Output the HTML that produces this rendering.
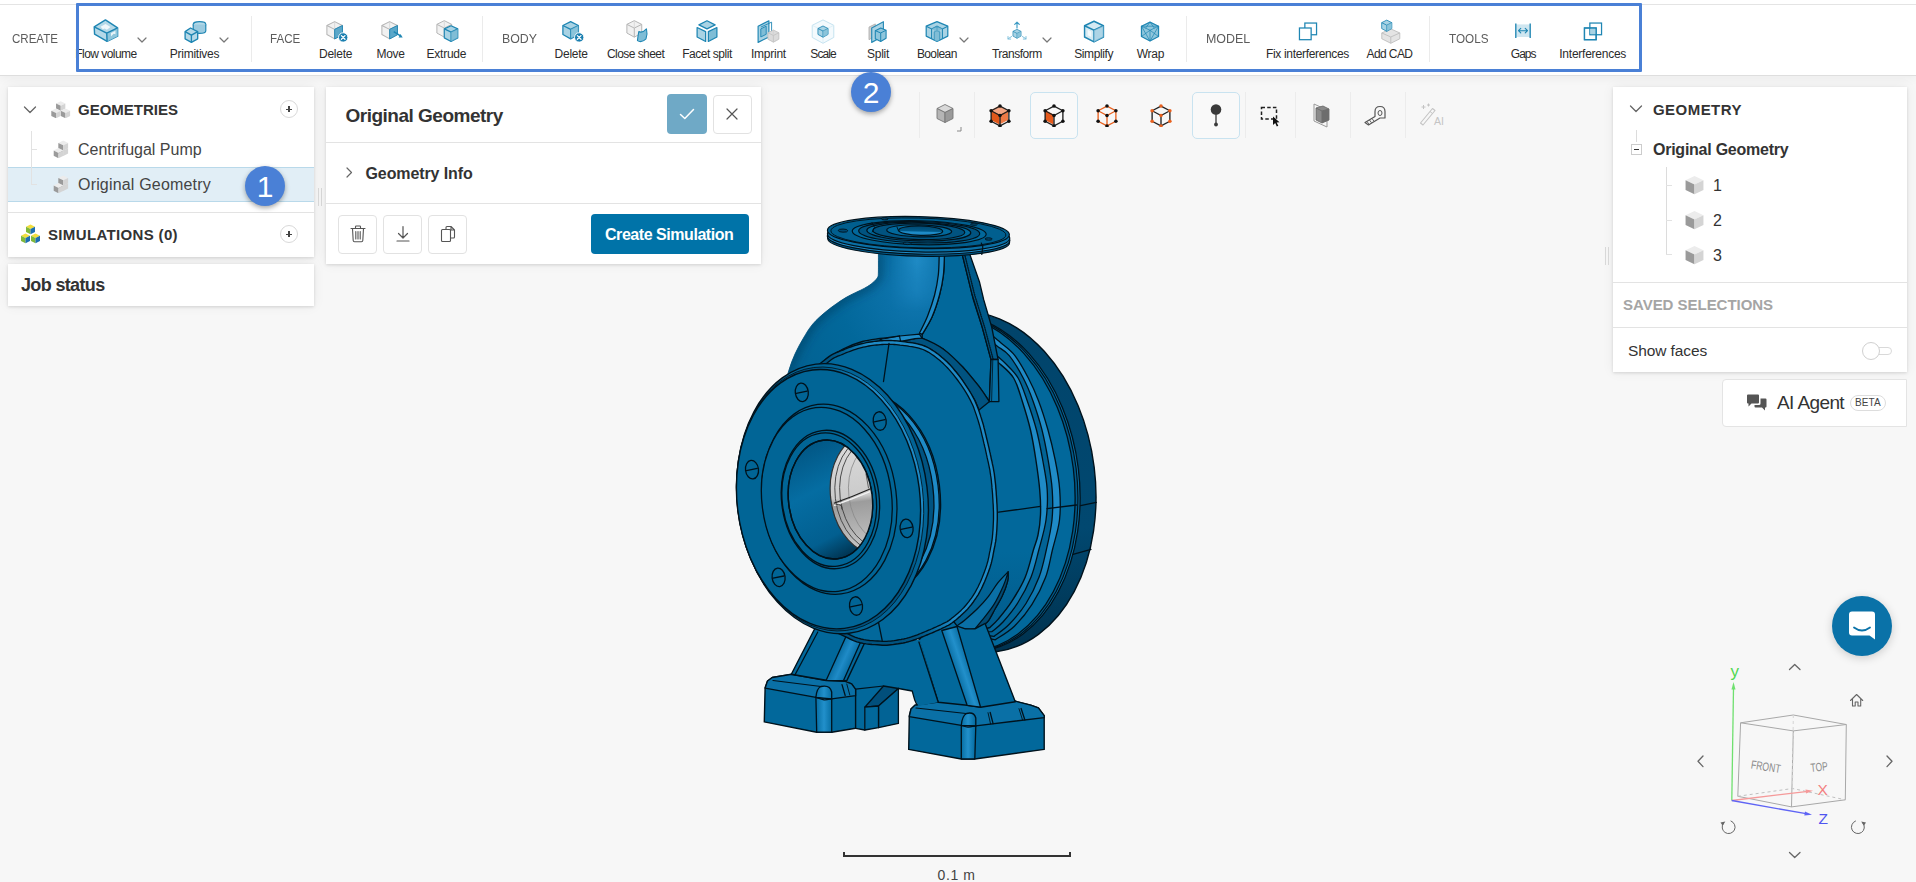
<!DOCTYPE html>
<html>
<head>
<meta charset="utf-8">
<title>SimScale</title>
<style>
*{box-sizing:border-box;margin:0;padding:0}
html,body{width:1916px;height:882px;overflow:hidden;background:#f7f7f7;font-family:"Liberation Sans",sans-serif;color:#333}
.abs{position:absolute}
#topbar{position:absolute;left:0;top:0;width:1916px;height:75.500px;background:#fff;border-bottom:1px solid #dedede;box-shadow:0 2px 10px rgba(0,0,0,.05)}
#topline{position:absolute;left:0;top:4px;width:1916px;height:1px;background:#e4e4e4}
#hl{position:absolute;left:76px;top:3px;width:1566px;height:69px;border:3.5px solid #4a80d6;background:transparent;border-radius:1px}
.grp{position:absolute;top:30.5px;font-size:13.5px;color:#5c5c5c;letter-spacing:0;white-space:nowrap;line-height:16px;transform-origin:0 50%}
.tl{position:absolute;top:47.2px;font-size:12px;color:#2b2b2b;white-space:nowrap;line-height:14px;transform:translateX(-50%);letter-spacing:-0.25px}
.sep{position:absolute;top:16px;width:1px;height:46px;background:#ebebeb}
.ti{position:absolute;top:19px;width:27px;height:25.2px;transform:translateX(-50%)}
.chev{position:absolute;width:10px;height:6px}
.panel{position:absolute;background:#fff;box-shadow:0 1px 3px rgba(0,0,0,.13),0 0 12px rgba(0,0,0,.06)}
.t{position:absolute;white-space:nowrap}
.plus{position:absolute;width:18px;height:18px;border:1px solid #d9d9d9;border-radius:50%;background:#fff}
.plus:before{content:"";position:absolute;left:5px;top:7.5px;width:6px;height:1.4px;background:#444}
.plus:after{content:"";position:absolute;left:7.3px;top:5px;width:1.4px;height:6px;background:#444}
.badge{position:absolute;width:40px;height:40px;border-radius:50%;background:#4a80d6;color:#fff;text-align:center;box-shadow:0 2px 5px rgba(0,0,0,.35)}
.ibtn{position:absolute;width:39px;height:39px;border:1px solid #e2e2e2;border-radius:4px;background:#fff}
.vsep{position:absolute;top:92px;width:1px;height:46px;background:#ececec}
</style>
</head>
<body>
<!-- TOPBAR -->
<div id="topbar"></div>
<div id="topline"></div>
<div id="toolbar">
<svg width="0" height="0" style="position:absolute">
<defs>
<!-- basic blue iso cube 24x24 centered at 12,12 -->
<symbol id="cubeB" viewBox="0 0 24 24">
<path d="M12 2 L21 6.5 L21 17 L12 22 L3 17 L3 6.5Z" fill="#a9d3e4" stroke="#1f86b3" stroke-width="1.5" stroke-linejoin="round"/>
<path d="M3 6.5 L12 11 L21 6.5 M12 11 L12 22" fill="none" stroke="#1f86b3" stroke-width="1.5" stroke-linejoin="round"/>
<path d="M12 11 L21 6.5 L21 17 L12 22Z" fill="#7fbdd6" opacity=".7"/>
</symbol>
<symbol id="cubeG" viewBox="0 0 24 24">
<path d="M12 2 L21 6.5 L21 17 L12 22 L3 17 L3 6.5Z" fill="#f1f1f1" stroke="#b5b5b5" stroke-width="1.2" stroke-linejoin="round"/>
<path d="M3 6.5 L12 11 L21 6.5 M12 11 L12 22" fill="none" stroke="#b5b5b5" stroke-width="1.2" stroke-linejoin="round"/>
<path d="M12 2 L12 11" stroke="#d0d0d0" stroke-width=".8"/>
</symbol>
<symbol id="chv" viewBox="0 0 10 6"><path d="M1 1 L5 5 L9 1" fill="none" stroke="#777" stroke-width="1.2" stroke-linecap="round" stroke-linejoin="round"/></symbol>
</defs>
</svg>
<div class="grp" style="left:12px;transform:scaleX(0.855)">CREATE</div>
<!-- Flow volume -->
<svg class="ti" style="left:106px" viewBox="0 0 30 28"><path d="M1.900 8.700 L14.400 1 L27.900 9.800 L27.900 19.100 L16.200 24.900 L2.300 16.800Z" fill="#b5d9e8" stroke="#1f86b3" stroke-width="1.600" stroke-linejoin="round"/><path d="M15.800 15.600 L27.900 9.800 L27.900 19.100 L16.200 24.900Z" fill="#8fc6dc"/><path d="M1.900 8.700 L15.800 15.600 L27.900 9.800 M15.800 15.600 L16.200 24.900" fill="none" stroke="#1f86b3" stroke-width="1.600" stroke-linejoin="round"/><path d="M9 8.500 L14.500 5.500 L20 9 L16 12 L13.500 10.500 L11.500 11.500Z M20.500 15.500 L25.500 13 L25.500 17 L23.500 16.500 L20.500 19.500Z" fill="#fff" opacity=".8"/></svg>
<div class="tl" style="left:106px;letter-spacing:-0.55px">Flow volume</div>
<svg class="chev" style="left:137px;top:37px"><use href="#chv"/></svg>
<!-- Primitives -->
<svg class="ti" style="left:195px" viewBox="0 0 30 28"><ellipse cx="20" cy="6" rx="7" ry="3" fill="#b5d9e8" stroke="#1f86b3" stroke-width="1.3"/><path d="M13 6 V13 A7 3 0 0 0 27 13 V6" fill="#9ccbe0" stroke="#1f86b3" stroke-width="1.3"/><path d="M10 10 L18 14 L18 22 L11 26 L4 22 L4 14Z" fill="#b5d9e8" stroke="#1f86b3" stroke-width="1.5" stroke-linejoin="round"/><path d="M4 14 L11 18 L18 14 M11 18 V26" fill="none" stroke="#1f86b3" stroke-width="1.5"/></svg>
<div class="tl" style="left:194.5px">Primitives</div>
<svg class="chev" style="left:219px;top:37px"><use href="#chv"/></svg>
<div class="sep" style="left:251px"></div>
<div class="grp" style="left:270px;transform:scaleX(0.857)">FACE</div>
<!-- Face delete -->
<svg class="ti" style="left:336px" viewBox="0 0 30 28"><use href="#cubeG" x="2" y="1" width="23" height="23"/><path d="M13.5 11.5 L22.2 7.2 V17.5 L13.5 22.2Z" fill="#5aa7c9" stroke="#1f86b3" stroke-width="1"/><circle cx="23" cy="20.5" r="5.2" fill="#1a7fb0" stroke="#fff" stroke-width="1"/><path d="M21 18.5 l4 4 m0 -4 l-4 4" stroke="#fff" stroke-width="1.4" stroke-linecap="round"/></svg>
<div class="tl" style="left:335.6px">Delete</div>
<!-- Face move -->
<svg class="ti" style="left:391px" viewBox="0 0 30 28"><use href="#cubeG" x="2" y="1" width="23" height="23"/><path d="M13.5 11.5 L22.2 7.2 V17.5 L13.5 22.2Z" fill="#5aa7c9" stroke="#1f86b3" stroke-width="1"/><path d="M18 14 L26 19" stroke="#1f86b3" stroke-width="1.5"/><path d="M28 20.5 L23.5 20.5 L25.5 16.8Z" fill="#1f86b3"/></svg>
<div class="tl" style="left:390.6px">Move</div>
<!-- Extrude -->
<svg class="ti" style="left:447px" viewBox="0 0 30 28"><use href="#cubeG" x="1" y="0" width="22" height="22"/><path d="M19.5 7.5 L27 11 V21 L19.5 25 L12 21 V11Z" fill="#a9d3e4" stroke="#1f86b3" stroke-width="1.3" stroke-linejoin="round"/><path d="M12 11 L19.5 14.5 L27 11 M19.5 14.5 V25" fill="none" stroke="#1f86b3" stroke-width="1.3"/><path d="M19.5 14.5 L27 11 V21 L19.5 25Z" fill="#6fb3d0" opacity=".7"/></svg>
<div class="tl" style="left:446.4px">Extrude</div>
<div class="sep" style="left:482px"></div>
<div class="grp" style="left:501.5px;transform:scaleX(0.914)">BODY</div>
<!-- Body delete -->
<svg class="ti" style="left:572px" viewBox="0 0 30 28"><use href="#cubeB" x="2" y="1" width="23" height="23"/><circle cx="23" cy="20.5" r="5.2" fill="#1a7fb0" stroke="#fff" stroke-width="1"/><path d="M21 18.5 l4 4 m0 -4 l-4 4" stroke="#fff" stroke-width="1.4" stroke-linecap="round"/></svg>
<div class="tl" style="left:571.2px">Delete</div>
<!-- Close sheet -->
<svg class="ti" style="left:637px" viewBox="0 0 30 28"><use href="#cubeG" x="1" y="0" width="22" height="22"/><path d="M17 14 Q21 16 25.5 11 Q27 17 25 22 Q20 27 15.5 24 Q16 19 17 14Z" fill="#7fbdd6" stroke="#1f86b3" stroke-width="1.2" stroke-linejoin="round"/></svg>
<div class="tl" style="left:635.6px;letter-spacing:-0.55px">Close sheet</div>
<!-- Facet split -->
<svg class="ti" style="left:707px" viewBox="0 0 30 28"><path d="M15 2 L24 6.5 L15 11 L6 6.5Z" fill="#a9d3e4" stroke="#1f86b3" stroke-width="1.4" stroke-linejoin="round"/><path d="M4 9.5 L13.5 14 V25 L4 20Z" fill="#a9d3e4" stroke="#1f86b3" stroke-width="1.4" stroke-linejoin="round"/><path d="M26 9.5 L16.5 14 V25 L26 20Z" fill="#7fbdd6" stroke="#1f86b3" stroke-width="1.4" stroke-linejoin="round"/></svg>
<div class="tl" style="left:707px;letter-spacing:-0.45px">Facet split</div>
<!-- Imprint -->
<svg class="ti" style="left:768px" viewBox="0 0 30 28"><path d="M4 8 L16 2 V20 L4 26Z" fill="#a9d3e4" stroke="#1f86b3" stroke-width="1.3" stroke-linejoin="round"/><path d="M7 11 L13 8 V17 L7 20Z" fill="#7fbdd6" stroke="#1f86b3" stroke-width="1"/><path d="M7 9 L19 3.5 V21" fill="none" stroke="#1f86b3" stroke-width="1"/><use href="#cubeG" x="13" y="11" width="16" height="16"/><path d="M21 12 l6.5 3.2 v7.6 l-6.5 3.6 l-6.500 -3.6 v-7.6z" fill="#c9c9c9" opacity=".55"/></svg>
<div class="tl" style="left:768.5px">Imprint</div>
<!-- Scale -->
<svg class="ti" style="left:823px" viewBox="0 0 30 28"><path d="M15 1 L27 7 V20.500 L15 27 L3 20.500 V7Z" fill="#f4fafd" stroke="#bfe0ee" stroke-width="1" stroke-linejoin="round"/><path d="M3 7 L15 13 L27 7 M15 13 V27" fill="none" stroke="#d5ebf4" stroke-width=".8"/><use href="#cubeB" x="7.5" y="6.500" width="15" height="15"/></svg>
<div class="tl" style="left:823px;letter-spacing:-0.95px">Scale</div>
<!-- Split -->
<svg class="ti" style="left:878px" viewBox="0 0 30 28"><path d="M5 9 L12 5.500 V19 L5 23Z" fill="#cfcfcf" stroke="#b0b0b0" stroke-width="1"/><path d="M8 10 L21 3 V19 L8 26Z" fill="#a9d3e4" stroke="#1f86b3" stroke-width="1.3" stroke-linejoin="round" opacity=".95"/><path d="M12 13 L18 10 L24 12.500 V21.500 L18 25 L12 22Z" fill="#8fc6dc" stroke="#1f86b3" stroke-width="1.2" stroke-linejoin="round"/><path d="M12 13 L18 15.500 L24 12.500 M18 15.500 V25" fill="none" stroke="#1f86b3" stroke-width="1.1"/></svg>
<div class="tl" style="left:878px">Split</div>
<!-- Boolean -->
<svg class="ti" style="left:937px" viewBox="0 0 30 28"><path d="M15 3 L27 8 V19 L15 25 L3 19 V8Z" fill="#a9d3e4" stroke="#1f86b3" stroke-width="1.4" stroke-linejoin="round"/><path d="M3 8 L9 11 L15 8 L21 11 L27 8 M9 11 V22 M21 11 V22 M15 8 V13 L12 14.500 V23.500 M15 13 L18 14.500 V23.500" fill="none" stroke="#1f86b3" stroke-width="1.2"/><path d="M9 11 L12 9.500 L15 8 L18 9.500 L21 11 L18 12.500 V23.500 L15 25 L12 23.500 V12.500Z" fill="#6fb3d0" opacity=".7"/></svg>
<div class="tl" style="left:936.8px;letter-spacing:-0.6px">Boolean</div>
<svg class="chev" style="left:959px;top:37px"><use href="#chv"/></svg>
<!-- Transform -->
<svg class="ti" style="left:1017px" viewBox="0 0 30 28"><use href="#cubeB" x="9" y="10.500" width="12" height="12"/><path d="M15 10 V4 M12.500 6 L15 3.500 L17.500 6" fill="none" stroke="#3d9bc4" stroke-width="1.3" stroke-linecap="round" stroke-linejoin="round"/><path d="M9 19.500 L5 22 M5 19.500 V22.300 H8" fill="none" stroke="#7fc0dc" stroke-width="1.1" stroke-linecap="round"/><path d="M21 19.500 L25 22 M25 19.500 V22.300 H22" fill="none" stroke="#7fc0dc" stroke-width="1.1" stroke-linecap="round"/></svg>
<div class="tl" style="left:1016.8px;letter-spacing:-0.5px">Transform</div>
<svg class="chev" style="left:1042px;top:37px"><use href="#chv"/></svg>
<!-- Simplify -->
<svg class="ti" style="left:1094px" viewBox="0 0 30 28"><path d="M15 2.500 L25.500 7.500 V20 L15 25.500 L4.500 20 V7.500Z" fill="#d4eaf3" stroke="#1f86b3" stroke-width="1.6" stroke-linejoin="round"/><path d="M4.500 7.500 L15 12.500 L25.500 7.500 M15 12.500 V25.500" fill="none" stroke="#1f86b3" stroke-width="1.6"/><path d="M15 12.500 L25.500 7.500 V20 L15 25.500Z" fill="#9ccbe0" opacity=".7"/><path d="M8 12 v6 l4 2 v-6z" fill="#fff" opacity=".7"/></svg>
<div class="tl" style="left:1093.6px;letter-spacing:-0.4px">Simplify</div>
<!-- Wrap -->
<svg class="ti" style="left:1150px" viewBox="0 0 30 28"><path d="M15 3.500 L24.500 8 V19.500 L15 24.500 L5.500 19.500 V8Z" fill="#8fc6dc" stroke="#1f86b3" stroke-width="1.4" stroke-linejoin="round"/><path d="M5.500 8 L15 12.500 L24.500 8 M15 12.500 V24.500 M5.500 8 L15 24.500 M24.500 8 L15 24.500 M5.500 19.500 L15 12.500 L24.500 19.500 M15 3.500 L10 10.300 M15 3.500 L20 10.300 M5.500 8 L24.500 8" fill="none" stroke="#1f86b3" stroke-width=".8"/></svg>
<div class="tl" style="left:1150.4px">Wrap</div>
<div class="sep" style="left:1185.500px"></div>
<div class="grp" style="left:1205.500px;transform:scaleX(0.921)">MODEL</div>
<!-- Fix interferences -->
<svg class="ti" style="left:1308px" viewBox="0 0 30 28"><rect x="11.500" y="4.500" width="13" height="13" fill="#fff" stroke="#1f86b3" stroke-width="1.4"/><rect x="5.500" y="10" width="13" height="13" fill="#fff" stroke="#1f86b3" stroke-width="1.4"/></svg>
<div class="tl" style="left:1307.500px;letter-spacing:-0.33px">Fix interferences</div>
<!-- Add CAD -->
<svg class="ti" style="left:1389px" viewBox="0 0 30 28"><path d="M17 11 L27 15.500 V22 L17 27 L7 22 V15.500Z" fill="#e4e4e4" stroke="#bdbdbd" stroke-width="1" stroke-linejoin="round"/><path d="M7 15.500 L17 20 L27 15.500 M17 20 V27" fill="none" stroke="#bdbdbd" stroke-width="1"/><use href="#cubeB" x="5" y="0" width="15" height="15"/></svg>
<div class="tl" style="left:1389.500px;letter-spacing:-0.6px">Add CAD</div>
<div class="sep" style="left:1429px"></div>
<div class="grp" style="left:1448.500px;transform:scaleX(0.868)">TOOLS</div>
<!-- Gaps -->
<svg class="ti" style="left:1523px" viewBox="0 0 30 28"><rect x="7" y="6" width="16" height="14" fill="#cfe6f0"/><path d="M7 5 V21 M23 5 V21" stroke="#1f86b3" stroke-width="1.5"/><path d="M10 13 H20 M12.500 10.500 L10 13 L12.500 15.500 M17.500 10.500 L20 13 L17.500 15.500" fill="none" stroke="#1f86b3" stroke-width="1.2" stroke-linecap="round" stroke-linejoin="round"/></svg>
<div class="tl" style="left:1523.200px;letter-spacing:-0.95px">Gaps</div>
<!-- Interferences -->
<svg class="ti" style="left:1593px" viewBox="0 0 30 28"><rect x="11.500" y="4.500" width="13" height="13" fill="#fff" stroke="#1f86b3" stroke-width="1.4"/><rect x="5.500" y="10" width="13" height="13" fill="none" stroke="#1f86b3" stroke-width="1.4"/><rect x="12.200" y="10.700" width="5.600" height="6.100" fill="#a9d3e4"/><rect x="5.500" y="10" width="13" height="13" fill="none" stroke="#1f86b3" stroke-width="1.4"/></svg>
<div class="tl" style="left:1592.700px">Interferences</div>
</div>
<div id="hl"></div>
<!-- LEFT PANELS -->
<div id="left">
<svg width="0" height="0" style="position:absolute"><defs>
<symbol id="gcube" viewBox="0 0 10 10"><path d="M5 0.200 L9.700 2.500 L5 4.800 L0.300 2.500Z" fill="#ececec"/><path d="M0.300 2.500 L5 4.800 V9.900 L0.300 7.600Z" fill="#9a9a9a"/><path d="M9.700 2.500 L5 4.800 V9.900 L9.700 7.600Z" fill="#d4d4d4"/></symbol>
</defs></svg>
<div class="panel" style="left:8px;top:87px;width:306px;height:170px"></div>
<div class="abs" style="left:8px;top:167px;width:306px;height:35px;background:#e1eef6;border-top:1px solid #b9d9ea;border-bottom:1px solid #b9d9ea"></div>
<div class="abs" style="left:8px;top:212px;width:306px;height:1px;background:#e3e3e3"></div>
<svg class="abs" style="left:23px;top:104.800px" width="14" height="10" viewBox="0 0 14 10"><path d="M1.500 2 L7 7.500 L12.500 2" fill="none" stroke="#666" stroke-width="1.300" stroke-linecap="round" stroke-linejoin="round"/></svg>
<svg class="abs" style="left:51px;top:100.500px" width="20" height="19" viewBox="0 0 20 19"><use href="#gcube" x="4.750" y="0" width="10" height="10"/><use href="#gcube" x="0" y="7.300" width="10" height="10"/><use href="#gcube" x="9.500" y="7.300" width="10" height="10"/></svg>
<div class="t" id="t_geoms" style="left:78px;top:100.800px;font-size:15px;font-weight:bold;line-height:18px;color:#333">GEOMETRIES</div>
<div class="plus" style="left:280px;top:100px"></div>
<div class="abs" style="left:31px;top:131px;width:1px;height:54px;background:#e2e2e2"></div>
<div class="abs" style="left:31px;top:149px;width:6px;height:1px;background:#e2e2e2"></div>
<div class="abs" style="left:31px;top:184px;width:6px;height:1px;background:#e2e2e2"></div>
<svg class="abs" style="left:52px;top:140px" width="17" height="19" viewBox="0 0 17 19"><use href="#gcube" x="6" y="5.550" width="10.500" height="10.500"/><use href="#gcube" x="6" y="0.300" width="10.500" height="10.500"/><use href="#gcube" x="1.280" y="7.860" width="10.500" height="10.500"/></svg>
<div class="t" id="t_cp" style="left:78px;top:140.200px;font-size:16px;line-height:20px;color:#444">Centrifugal Pump</div>
<svg class="abs" style="left:52px;top:175px" width="17" height="19" viewBox="0 0 17 19"><use href="#gcube" x="6" y="5.550" width="10.500" height="10.500"/><use href="#gcube" x="6" y="0.300" width="10.500" height="10.500"/><use href="#gcube" x="1.280" y="7.860" width="10.500" height="10.500"/></svg>
<div class="t" id="t_og" style="left:78px;top:175.200px;font-size:16px;line-height:20px;color:#444;letter-spacing:.18px">Original Geometry</div>
<div class="badge" style="left:245px;top:166px"><span style="font-size:30px;line-height:41px;display:block">1</span></div>
<!-- simulations icon -->
<svg class="abs" style="left:20px;top:224px" width="21" height="21" viewBox="0 0 21 21">
<g id="sc1"><path d="M10.500 0.500 L15 2.800 L10.500 5.100 L6 2.800Z" fill="#f1de3c"/><path d="M6 2.800 L10.500 5.100 V10.300 L6 8Z" fill="#7fb83a"/><path d="M15 2.800 L10.500 5.100 V10.300 L15 8Z" fill="#1d6fb0"/></g>
<use href="#sc1" x="-5" y="9"/><use href="#sc1" x="5" y="9"/></svg>
<div class="t" id="t_sim" style="left:48px;top:225.500px;font-size:15px;font-weight:bold;line-height:18px;color:#333;letter-spacing:0.35px">SIMULATIONS (0)</div>
<div class="plus" style="left:280px;top:225px"></div>
<div class="panel" style="left:8px;top:264px;width:306px;height:42px"></div>
<div class="t" id="t_job" style="left:21px;top:274px;font-size:18px;font-weight:bold;line-height:22px;color:#333;letter-spacing:-0.65px">Job status</div>
<!-- splitter -->
<div class="abs" style="left:318px;top:188px;width:1px;height:18px;background:#d8d8d8"></div>
<div class="abs" style="left:321px;top:188px;width:1px;height:18px;background:#d8d8d8"></div>
</div>
<!-- MIDDLE PANEL -->
<div id="mid">
<div class="panel" style="left:326px;top:87px;width:435px;height:177px"></div>
<div class="abs" style="left:326px;top:142px;width:435px;height:1px;background:#e3e3e3"></div>
<div class="abs" style="left:326px;top:203px;width:435px;height:1px;background:#e3e3e3"></div>
<div class="t" id="t_title" style="left:345.500px;top:103.700px;font-size:19px;line-height:24px;color:#333;font-weight:bold;letter-spacing:-.5px">Original Geometry</div>
<div class="abs" style="left:667px;top:94px;width:40px;height:40px;border-radius:4px;background:#6fa9c6"></div>
<svg class="abs" style="left:677px;top:105px" width="20" height="18" viewBox="0 0 20 18"><path d="M3.500 9.500 L7.800 13.500 L16.500 4.500" fill="none" stroke="#fff" stroke-width="1.500" stroke-linecap="round" stroke-linejoin="round"/></svg>
<div class="ibtn" style="left:712.500px;top:94.500px"></div>
<svg class="abs" style="left:724px;top:106px" width="16" height="16" viewBox="0 0 16 16"><path d="M3 3 L13 13 M13 3 L3 13" stroke="#555" stroke-width="1.200" stroke-linecap="round"/></svg>
<svg class="abs" style="left:344px;top:166px" width="10" height="13" viewBox="0 0 10 13"><path d="M3 2 L7.500 6.500 L3 11" fill="none" stroke="#666" stroke-width="1.200" stroke-linecap="round" stroke-linejoin="round"/></svg>
<div class="t" id="t_ginfo" style="left:365.500px;top:164.200px;font-size:16px;line-height:20px;color:#333;font-weight:bold;letter-spacing:-.1px">Geometry Info</div>
<div class="ibtn" style="left:338px;top:214.500px"></div>
<svg class="abs" style="left:349px;top:224px" width="18" height="20" viewBox="0 0 18 20"><path d="M2 4.500 H16 M6.500 4.500 V2.800 Q6.500 2 7.300 2 H10.700 Q11.500 2 11.500 2.800 V4.500 M3.500 4.500 L4.200 16.500 Q4.300 17.800 5.500 17.800 H12.500 Q13.700 17.800 13.800 16.500 L14.500 4.500 M6.800 7.500 V15 M9 7.500 V15 M11.200 7.500 V15" fill="none" stroke="#555" stroke-width="1.100" stroke-linecap="round" stroke-linejoin="round"/></svg>
<div class="ibtn" style="left:383px;top:214.500px"></div>
<svg class="abs" style="left:394px;top:224px" width="18" height="20" viewBox="0 0 18 20"><path d="M9 2.500 V13.500 M4.500 9.500 L9 14 L13.500 9.500 M3 17 H15" fill="none" stroke="#555" stroke-width="1.200" stroke-linecap="round" stroke-linejoin="round"/></svg>
<div class="ibtn" style="left:428px;top:214.500px"></div>
<svg class="abs" style="left:439px;top:224px" width="18" height="20" viewBox="0 0 18 20"><path d="M7 5.500 V3.500 Q7 2.500 8 2.500 H12 L15.500 6 V13 Q15.500 14 14.500 14 H11.500 M12 2.500 V6 H15.500 M3.500 5.500 H10.500 Q11.500 5.500 11.500 6.500 V16.500 Q11.500 17.500 10.500 17.500 H3.500 Q2.500 17.500 2.500 16.500 V6.500 Q2.500 5.500 3.500 5.500Z" fill="none" stroke="#555" stroke-width="1.100" stroke-linejoin="round"/></svg>
<div class="abs" style="left:591px;top:214px;width:158px;height:40px;border-radius:4px;background:#0073a8"></div>
<div class="t" id="t_cs" style="left:605px;top:225.200px;font-size:16px;line-height:20px;color:#fff;font-weight:bold;letter-spacing:-.45px">Create Simulation</div>
</div>
<!-- VIEW TOOLBAR -->
<div id="viewbar">
<div class="badge" style="left:851px;top:72px"><span style="font-size:30px;line-height:41px;display:block">2</span></div>
<div class="vsep" style="left:919px"></div><div class="vsep" style="left:974px"></div><div class="vsep" style="left:1245px"></div><div class="vsep" style="left:1295px"></div><div class="vsep" style="left:1350px"></div><div class="vsep" style="left:1405px"></div>
<div class="abs" style="left:1029.500px;top:91.500px;width:48px;height:47px;border:1px solid #c9e3f0;border-radius:5px;background:#f9f9f9"></div>
<div class="abs" style="left:1191.500px;top:91.500px;width:48px;height:47px;border:1px solid #c9e3f0;border-radius:5px;background:#f9f9f9"></div>
<svg width="0" height="0" style="position:absolute"><defs>
<symbol id="vc" viewBox="0 0 22 22"><path d="M11 1.500 L19.500 6 V16 L11 20.500 L2.500 16 V6Z" fill="none" stroke-width="1.300" stroke-linejoin="round"/><path d="M2.500 6 L11 10.500 L19.500 6 M11 10.500 V20.500" fill="none" stroke-width="1.300"/></symbol>
<symbol id="vdots" viewBox="0 0 22 22"><circle cx="11" cy="1.500" r="1.700"/><circle cx="19.500" cy="6" r="1.700"/><circle cx="19.500" cy="16" r="1.700"/><circle cx="11" cy="20.500" r="1.700"/><circle cx="2.500" cy="16" r="1.700"/><circle cx="2.500" cy="6" r="1.700"/><circle cx="11" cy="10.500" r="1.700"/></symbol>
</defs></svg>
<!-- gray cube -->
<svg class="abs" style="left:934px;top:103px" width="22" height="24" viewBox="0 0 22 24"><path d="M11 1.500 L19 5.500 L11 9.500 L3 5.500Z" fill="#d9d9d9" stroke="#777" stroke-width=".9" stroke-linejoin="round"/><path d="M3 5.500 L11 9.500 V19.500 L3 15.500Z" fill="#b5b5b5" stroke="#777" stroke-width=".9" stroke-linejoin="round"/><path d="M19 5.500 L11 9.500 V19.500 L19 15.500Z" fill="#9a9a9a" stroke="#777" stroke-width=".9" stroke-linejoin="round"/></svg>
<svg class="abs" style="left:956px;top:126px" width="6" height="6"><path d="M5 1 V5 H1" fill="none" stroke="#888" stroke-width="1"/></svg>
<!-- orange solid -->
<svg class="abs" style="left:988px;top:103px" width="23" height="24" viewBox="-0.500 -1 23 24"><path d="M11 1.500 L19.500 6 L11 10.500 L2.500 6Z" fill="#f4a583"/><path d="M2.500 6 L11 10.500 V20.500 L2.500 16Z" fill="#e0581b"/><path d="M19.500 6 L11 10.500 V20.500 L19.500 16Z" fill="#ee7a45"/><use href="#vc" stroke="#222"/><use href="#vdots" fill="#111"/></svg>
<!-- face select -->
<svg class="abs" style="left:1041.500px;top:103px" width="23" height="24" viewBox="-0.500 -1 23 24"><path d="M2.500 6 L11 10.500 V20.500 L2.500 16Z" fill="#e55a1c"/><use href="#vc" stroke="#222"/><use href="#vdots" fill="#111"/></svg>
<!-- edge select -->
<svg class="abs" style="left:1095px;top:103px" width="23" height="24" viewBox="-0.500 -1 23 24"><use href="#vc" stroke="#e8611f"/><use href="#vdots" fill="#111"/></svg>
<!-- vertex select -->
<svg class="abs" style="left:1149px;top:103px" width="23" height="24" viewBox="-0.500 -1 23 24"><use href="#vc" stroke="#222"/><use href="#vdots" fill="#e8611f"/></svg>
<!-- pin -->
<svg class="abs" style="left:1204.800px;top:100px" width="22" height="30" viewBox="0 0 22 30"><circle cx="11" cy="9.500" r="5.300" fill="#3a3a3a"/><path d="M11 14 V24" stroke="#3a3a3a" stroke-width="1.300"/><circle cx="11" cy="24.500" r="1.900" fill="#3a3a3a"/></svg>
<!-- dashed select -->
<svg class="abs" style="left:1258px;top:103px" width="26" height="26" viewBox="0 0 26 26"><rect x="3.500" y="4.500" width="15" height="11.500" fill="none" stroke="#222" stroke-width="1.500" stroke-dasharray="3.500 2.200"/><path d="M15 13.500 V22 L17.200 20 L18.800 23.500 L20.300 22.800 L18.700 19.500 L21.500 19.300Z" fill="#111"/></svg>
<!-- cut plane -->
<svg class="abs" style="left:1309px;top:101px" width="26" height="28" viewBox="0 0 26 28"><path d="M5 3 L5 20 L18 26" fill="none" stroke="#999" stroke-width="1"/><path d="M5 3 L18 9 V26" fill="none" stroke="#999" stroke-width="1"/><path d="M7 7 L14 5 L20 8 V19 L13 22 L7 19Z" fill="#8a8a8a" stroke="#666" stroke-width=".8"/><path d="M7 7 L13 10 V22" fill="none" stroke="#666" stroke-width=".8"/><path d="M13 10 L20 8" stroke="#666" stroke-width=".8"/><path d="M13 10 L20 8 V19 L13 22Z" fill="#6d6d6d"/></svg>
<!-- tape -->
<svg class="abs" style="left:1362px;top:102px" width="26" height="26" viewBox="0 0 26 26"><path d="M3 20.500 L13 14.500 V9.500 Q13 4.500 18 4.500 Q23 4.500 23 9.500 V16 L18 16 L6.500 23Z" fill="none" stroke="#555" stroke-width="1.200" stroke-linejoin="round"/><path d="M16 11 a2 2.500 0 1 0 4 0 a2 2.500 0 1 0 -4 0" fill="none" stroke="#555" stroke-width="1"/><path d="M5 19.500 l2 2.800 M7.500 18 l2 2.800 M10 16.500 l2 2.800" stroke="#555" stroke-width=".9"/></svg>
<!-- AI wand -->
<svg class="abs" style="left:1417px;top:102px" width="30" height="26" viewBox="0 0 30 26"><path d="M3.500 21 L15.500 6.500 L18 8.500 L6 23Z" fill="none" stroke="#c4c4c4" stroke-width="1.100" stroke-linejoin="round"/><path d="M13 9.500 L15.500 11.500" stroke="#c4c4c4" stroke-width="1"/><path d="M6.500 3 v4 m-2 -2 h4 M11.500 1.500 v3 m-1.500 -1.500 h3" stroke="#c4c4c4" stroke-width="1"/><text x="17" y="23" font-size="10.500" fill="#c4c4c4" font-family="Liberation Sans">AI</text></svg>
</div>
<!-- RIGHT PANEL -->
<div id="right">
<div class="panel" style="left:1612.500px;top:87px;width:294px;height:285px"></div>
<svg class="abs" style="left:1629px;top:104px" width="14" height="10" viewBox="0 0 14 10"><path d="M1.500 2 L7 7.500 L12.500 2" fill="none" stroke="#666" stroke-width="1.300" stroke-linecap="round" stroke-linejoin="round"/></svg>
<div class="t" id="t_geom" style="left:1653px;top:100.500px;font-size:15px;font-weight:bold;line-height:18px;color:#333;letter-spacing:0.45px">GEOMETRY</div>
<div class="abs" style="left:1636px;top:130px;width:1px;height:12px;background:#dcdcdc"></div>
<div class="abs" style="left:1630.500px;top:143.500px;width:11px;height:11px;border:1px solid #ccc;background:#fff"></div>
<div class="abs" style="left:1633.500px;top:148.500px;width:5px;height:1.500px;background:#333"></div>
<div class="t" id="t_og2" style="left:1653px;top:140.200px;font-size:16px;font-weight:bold;line-height:20px;color:#333;letter-spacing:-0.25px">Original Geometry</div>
<div class="abs" style="left:1666px;top:167px;width:1px;height:88px;background:#dcdcdc"></div>
<div class="abs" style="left:1666px;top:185px;width:6px;height:1px;background:#e2e2e2"></div>
<div class="abs" style="left:1666px;top:220px;width:6px;height:1px;background:#e2e2e2"></div>
<div class="abs" style="left:1666px;top:254px;width:6px;height:1px;background:#e2e2e2"></div>
<svg class="abs" style="left:1685px;top:175px" width="19" height="20"><use href="#gcube" width="19" height="20"/></svg>
<svg class="abs" style="left:1685px;top:210px" width="19" height="20"><use href="#gcube" width="19" height="20"/></svg>
<svg class="abs" style="left:1685px;top:245px" width="19" height="20"><use href="#gcube" width="19" height="20"/></svg>
<div class="t" style="left:1713px;top:175.8px;font-size:16px;line-height:20px;color:#333">1</div>
<div class="t" style="left:1713px;top:210.8px;font-size:16px;line-height:20px;color:#333">2</div>
<div class="t" style="left:1713px;top:245.8px;font-size:16px;line-height:20px;color:#333">3</div>
<div class="abs" style="left:1612.500px;top:282px;width:294px;height:1px;background:#e3e3e3"></div>
<div class="t" id="t_saved" style="left:1623px;top:295.800px;font-size:15px;font-weight:bold;line-height:18px;color:#a5a5a5;letter-spacing:-0.03px">SAVED SELECTIONS</div>
<div class="abs" style="left:1612.500px;top:327px;width:294px;height:1px;background:#e3e3e3"></div>
<div class="t" id="t_show" style="left:1628px;top:341px;font-size:15.500px;line-height:20px;color:#333;letter-spacing:-.1px">Show faces</div>
<div class="abs" style="left:1872px;top:346.500px;width:20px;height:8px;border-radius:4px;background:#fff;border:1px solid #d9d9d9"></div>
<div class="abs" style="left:1861.500px;top:341.500px;width:18px;height:18px;border-radius:50%;background:#fff;border:1px solid #d0d0d0"></div>
<!-- AI agent -->
<div class="abs" style="left:1721.500px;top:378.500px;width:185px;height:48px;border-radius:4px 0 0 4px;background:#fff;border:1px solid #e4e4e4"></div>
<svg class="abs" style="left:1745px;top:393px" width="24" height="20" viewBox="0 0 24 20"><path d="M2 2.500 Q2 1.500 3 1.500 H13 Q14 1.500 14 2.500 V9.500 Q14 10.500 13 10.500 H6.500 L3.500 13.500 V10.500 H3 Q2 10.500 2 9.500Z" fill="#555"/><path d="M15.500 5.500 H20.500 Q21.500 5.500 21.500 6.500 V13.500 Q21.500 14.500 20.500 14.500 H20 V17.500 L17 14.500 H10.500 Q9.500 14.500 9.500 13.500 V12 H14 Q15.500 12 15.500 10.500Z" fill="#555"/></svg>
<div class="t" id="t_ai" style="left:1777px;top:391px;font-size:19px;line-height:24px;color:#333;letter-spacing:-.6px">AI Agent</div>
<div class="abs" style="left:1849.500px;top:394.500px;width:36px;height:16px;border:1px solid #ddd;border-radius:8px;background:#fff"></div>
<div class="t" style="left:1855px;top:396.500px;font-size:10px;line-height:12px;color:#444;letter-spacing:.1px">BETA</div>
<!-- splitter -->
<div class="abs" style="left:1605px;top:247px;width:1px;height:18px;background:#d8d8d8"></div>
<div class="abs" style="left:1608px;top:247px;width:1px;height:18px;background:#d8d8d8"></div>
</div>
<!-- PUMP -->
<div id="pump">
<svg class="abs" style="left:720px;top:200px" width="400" height="580" viewBox="720 200 400 580">
<defs>
<linearGradient id="gneck" gradientUnits="userSpaceOnUse" x1="890" x2="944" y1="0" y2="0"><stop offset="0" stop-color="#1f8ac4" stop-opacity="0"/><stop offset=".5" stop-color="#1f8ac4" stop-opacity="1"/><stop offset="1" stop-color="#1f8ac4" stop-opacity=".15"/></linearGradient>
<radialGradient id="gvol" gradientUnits="userSpaceOnUse" cx="916" cy="290" r="130"><stop offset="0" stop-color="#1279b3"/><stop offset=".25" stop-color="#0a70a7"/><stop offset=".6" stop-color="#02689b"/><stop offset="1" stop-color="#026394"/></radialGradient>
<linearGradient id="ghole" gradientUnits="userSpaceOnUse" x1="800" x2="845" y1="440" y2="560"><stop offset="0" stop-color="#015380"/><stop offset=".4" stop-color="#056da2"/><stop offset=".78" stop-color="#025f90"/><stop offset="1" stop-color="#002d47"/></linearGradient>
<linearGradient id="ggray" gradientUnits="userSpaceOnUse" x1="0" x2="0" y1="446" y2="548"><stop offset="0" stop-color="#d9d9d9"/><stop offset=".47" stop-color="#cbcbcb"/><stop offset=".53" stop-color="#9c9c9c"/><stop offset="1" stop-color="#c6c6c6"/></linearGradient>
<linearGradient id="glegR" gradientUnits="userSpaceOnUse" x1="941.8" y1="630.5" x2="956.65" y2="625.5"><stop offset="0" stop-color="#0a70a6"/><stop offset=".5" stop-color="#2290cb"/><stop offset="1" stop-color="#0a70a6"/></linearGradient>
<linearGradient id="glegL" gradientUnits="userSpaceOnUse" x1="848" y1="632" x2="862.2" y2="638.4"><stop offset="0" stop-color="#0a70a6"/><stop offset=".5" stop-color="#1f8bc7"/><stop offset="1" stop-color="#0a70a6"/></linearGradient>
<linearGradient id="gcorL" gradientUnits="userSpaceOnUse" x1="816" x2="832" y1="0" y2="0"><stop offset="0" stop-color="#056da2"/><stop offset=".5" stop-color="#2290cb"/><stop offset="1" stop-color="#056da2"/></linearGradient>
<linearGradient id="gcorR" gradientUnits="userSpaceOnUse" x1="961" x2="975" y1="0" y2="0"><stop offset="0" stop-color="#056da2"/><stop offset=".5" stop-color="#2290cb"/><stop offset="1" stop-color="#056da2"/></linearGradient>
<linearGradient id="grim" gradientUnits="userSpaceOnUse" x1="746.3" y1="538" x2="1033.7" y2="452"><stop offset="0" stop-color="#015380"/><stop offset=".44" stop-color="#015380"/><stop offset=".49" stop-color="#026395"/><stop offset=".58" stop-color="#1f8bc7"/><stop offset="1" stop-color="#1f8bc7"/></linearGradient>
<linearGradient id="gside" gradientUnits="userSpaceOnUse" x1="1000" y1="420" x2="1000" y2="640"><stop offset="0" stop-color="#02689b"/><stop offset=".6" stop-color="#02689b"/><stop offset="1" stop-color="#015a8a"/></linearGradient>
<linearGradient id="gridge" gradientUnits="userSpaceOnUse" x1="0" y1="520" x2="0" y2="645"><stop offset="0" stop-color="#1f8bc7"/><stop offset=".25" stop-color="#1f8bc7"/><stop offset=".7" stop-color="#0a70a6"/><stop offset="1" stop-color="#015f90"/></linearGradient>
<linearGradient id="gdark" gradientUnits="userSpaceOnUse" x1="0" y1="330" x2="0" y2="655"><stop offset="0" stop-color="#01446b"/><stop offset=".65" stop-color="#014870"/><stop offset="1" stop-color="#00324f"/></linearGradient>
<clipPath id="chole"><ellipse cx="830.4" cy="499.5" rx="41.9" ry="59.7" transform="rotate(-7.05 830.4 499.5)"/></clipPath>
</defs>
<ellipse cx="975.1" cy="482.0" rx="120.0" ry="171.0" transform="rotate(-7.05 975.1 482.0)" fill="url(#gdark)" stroke="#00121c" stroke-width="1.4" />
<ellipse cx="960.2" cy="482.9" rx="119.0" ry="169.5" transform="rotate(-7.05 960.2 482.9)" fill="#0a70a6" stroke="#00121c" stroke-width="1.3" />
<ellipse cx="958.0" cy="482.9" rx="119.0" ry="169.5" transform="rotate(-7.05 958.0 482.9)" fill="#015a8a" stroke="#00121c" stroke-width="1.2" />
<ellipse cx="955.2" cy="482.9" rx="119.0" ry="169.5" transform="rotate(-7.05 955.2 482.9)" fill="#02689b" stroke="#00121c" stroke-width="1.3" />
<path d="M1073.0 554.4 L1091.0 549.4" fill="none" stroke="#00121c" stroke-width="1.3" stroke-linejoin="round" stroke-linecap="round" />
<path d="M989.0 333.0 C991.0 334.7 996.7 339.3 1001.0 343.0 C1005.3 346.7 1010.2 349.6 1014.7 355.4 C1019.2 361.2 1024.3 370.4 1028.3 378.0 C1032.3 385.6 1035.2 392.0 1038.5 400.7 C1041.8 409.4 1045.2 420.1 1048.0 430.0 C1050.8 439.9 1053.2 450.1 1055.2 460.0 C1057.2 469.9 1059.0 479.7 1059.7 489.7 C1060.4 499.7 1060.7 509.9 1059.5 520.0 C1058.3 530.0 1054.7 540.5 1052.4 550.0 C1050.1 559.5 1049.0 568.1 1045.6 577.2 C1042.2 586.3 1037.2 596.2 1032.0 604.4 C1026.8 612.6 1020.5 620.3 1014.4 626.2 C1008.3 632.1 998.5 637.5 995.3 639.8 L960 632 L960 345Z" fill="url(#gridge)" stroke="#00121c" stroke-width="1.3" stroke-linejoin="round" stroke-linecap="round" />
<path d="M988.0 338.0 C989.5 339.3 993.5 343.1 997.0 346.0 C1000.5 348.9 1004.6 350.1 1009.0 355.4 C1013.4 360.7 1019.2 370.4 1023.2 378.0 C1027.2 385.6 1029.8 392.0 1032.9 400.7 C1036.0 409.4 1039.5 420.1 1042.0 430.0 C1044.5 439.9 1046.4 450.1 1048.1 460.0 C1049.8 469.9 1051.5 479.7 1052.2 489.7 C1052.9 499.7 1053.0 509.9 1052.0 520.0 C1051.0 530.0 1048.5 540.5 1046.3 550.0 C1044.1 559.5 1042.4 568.3 1039.0 577.2 C1035.6 586.1 1031.0 595.6 1026.0 603.5 C1021.0 611.4 1014.3 619.0 1009.0 624.5 C1003.7 630.0 996.5 634.4 994.0 636.4 L960 632 L960 345Z" fill="#026395" stroke="#00121c" stroke-width="1.3" stroke-linejoin="round" stroke-linecap="round" />
<path d="M990.0 350.0 C992.5 352.2 1000.3 358.3 1005.0 363.0 C1009.7 367.7 1014.4 371.7 1018.1 378.0 C1021.8 384.3 1024.1 392.0 1027.2 400.7 C1030.3 409.4 1033.9 420.1 1036.5 430.0 C1039.1 439.9 1040.9 450.1 1042.7 460.0 C1044.5 469.9 1046.7 479.7 1047.2 489.7 C1047.8 499.7 1047.4 509.9 1046.0 520.0 C1044.6 530.0 1041.3 540.5 1038.8 550.0 C1036.3 559.5 1034.5 568.5 1031.0 577.2 C1027.5 586.0 1022.7 595.0 1018.0 602.5 C1013.3 610.0 1007.3 617.1 1003.0 622.0 C998.7 626.9 993.8 630.0 992.0 631.6 L960 632 L960 345Z" fill="url(#gridge)" stroke="#00121c" stroke-width="1.3" stroke-linejoin="round" stroke-linecap="round" />
<clipPath id="cvol"><path d="M878.4 250.0 C878.4 253.7 878.5 267.4 878.4 272.0 C878.2 276.6 878.4 275.8 877.5 277.5 C876.6 279.2 875.1 280.7 873.0 282.5 C870.9 284.3 869.1 285.7 864.6 288.2 C860.1 290.7 852.1 293.8 845.8 297.6 C839.5 301.4 832.5 306.4 827.0 310.8 C821.5 315.2 816.8 319.4 812.9 323.9 C809.0 328.4 806.5 333.0 803.5 338.0 C800.5 343.0 797.4 348.7 795.0 354.0 C792.6 359.3 790.7 364.3 789.0 370.0 C787.3 375.7 786.5 378.0 785.0 388.0 C783.5 398.0 780.8 423.0 780.0 430.0 L800 480 L900 480 L960 400 L950 250Z"/></clipPath><filter id="fblur" x="-20%" y="-20%" width="140%" height="140%"><feGaussianBlur stdDeviation="4"/></filter>
<path d="M878.4 250.0 C878.4 253.7 878.5 267.4 878.4 272.0 C878.2 276.6 878.4 275.8 877.5 277.5 C876.6 279.2 875.1 280.7 873.0 282.5 C870.9 284.3 869.1 285.7 864.6 288.2 C860.1 290.7 852.1 293.8 845.8 297.6 C839.5 301.4 832.5 306.4 827.0 310.8 C821.5 315.2 816.8 319.4 812.9 323.9 C809.0 328.4 806.5 333.0 803.5 338.0 C800.5 343.0 797.4 348.7 795.0 354.0 C792.6 359.3 790.7 364.3 789.0 370.0 C787.3 375.7 786.5 378.0 785.0 388.0 C783.5 398.0 780.8 423.0 780.0 430.0 L800 480 L900 480 L960 400 L950 250Z" fill="url(#gvol)" stroke="none" stroke-width="1.4" stroke-linejoin="round" stroke-linecap="round" />
<mask id="mneck"><linearGradient id="gfade" gradientUnits="userSpaceOnUse" x1="0" x2="0" y1="262" y2="312"><stop offset="0" stop-color="#fff"/><stop offset="1" stop-color="#000"/></linearGradient><rect x="870" y="240" width="90" height="90" fill="url(#gfade)"/></mask>
<path d="M884 250 V330 H950 V250Z" fill="url(#gneck)" mask="url(#mneck)"/>
<g clip-path="url(#cvol)"><path d="M878.4 250.0 C878.4 253.7 878.5 267.4 878.4 272.0 C878.2 276.6 878.4 275.8 877.5 277.5 C876.6 279.2 875.1 280.7 873.0 282.5 C870.9 284.3 869.1 285.7 864.6 288.2 C860.1 290.7 852.1 293.8 845.8 297.6 C839.5 301.4 832.5 306.4 827.0 310.8 C821.5 315.2 816.8 319.4 812.9 323.9 C809.0 328.4 806.5 333.0 803.5 338.0 C800.5 343.0 797.4 348.7 795.0 354.0 C792.6 359.3 790.7 364.3 789.0 370.0 C787.3 375.7 786.5 378.0 785.0 388.0 C783.5 398.0 780.8 423.0 780.0 430.0" fill="none" stroke="#013a5c" stroke-opacity=".55" stroke-width="9" filter="url(#fblur)"/></g>
<path d="M878.4 250.0 C878.4 253.7 878.5 267.4 878.4 272.0 C878.2 276.6 878.4 275.8 877.5 277.5 C876.6 279.2 875.1 280.7 873.0 282.5 C870.9 284.3 869.1 285.7 864.6 288.2 C860.1 290.7 852.1 293.8 845.8 297.6 C839.5 301.4 832.5 306.4 827.0 310.8 C821.5 315.2 816.8 319.4 812.9 323.9 C809.0 328.4 806.5 333.0 803.5 338.0 C800.5 343.0 797.4 348.7 795.0 354.0 C792.6 359.3 790.7 364.3 789.0 370.0 C787.3 375.7 786.5 378.0 785.0 388.0 C783.5 398.0 780.8 423.0 780.0 430.0" fill="none" stroke="#01507a" stroke-width="0.8" stroke-linejoin="round" stroke-linecap="round" />
<path d="M975.0 348.0 C977.2 349.2 983.8 352.3 988.0 355.0 C992.2 357.7 995.7 360.2 1000.0 364.0 C1004.3 367.8 1009.9 371.9 1013.6 378.0 C1017.3 384.1 1019.3 392.0 1022.1 400.7 C1024.9 409.4 1028.2 420.1 1030.5 430.0 C1032.8 439.9 1034.4 450.1 1035.9 460.0 C1037.4 469.9 1038.9 480.6 1039.7 489.7 C1040.5 498.8 1040.8 507.2 1040.5 514.7 C1040.2 522.2 1039.2 529.1 1038.0 535.0 C1036.8 540.9 1035.5 543.0 1033.4 550.0 C1031.3 557.0 1028.8 568.6 1025.2 577.2 C1021.6 585.8 1016.1 594.7 1011.6 601.7 C1007.1 608.7 1001.6 615.1 998.0 619.4 C994.4 623.7 991.2 626.1 989.9 627.5 L975 632 L950 628 L940 600 L940 400Z" fill="url(#gside)" stroke="#00121c" stroke-width="1.4" stroke-linejoin="round" stroke-linecap="round" />
<path d="M998.6 512.2 L1040.5 506.4" fill="none" stroke="#00121c" stroke-width="1.3" stroke-linejoin="round" stroke-linecap="round" />
<path d="M1047.0 508.6 L1076.5 505.0" fill="none" stroke="#00121c" stroke-width="1.3" stroke-linejoin="round" stroke-linecap="round" />
<path d="M1080.5 505.6 L1096.3 502.3" fill="none" stroke="#00121c" stroke-width="1.3" stroke-linejoin="round" stroke-linecap="round" />
<path d="M1008.2 571.8 C1006.5 573.6 1001.3 578.6 998.0 582.7 C994.7 586.8 991.9 592.0 988.5 596.3 C985.1 600.6 981.7 604.4 977.6 608.5 C973.5 612.6 967.4 617.8 964.0 620.7 C960.6 623.7 957.0 624.8 957.2 626.2 C957.4 627.6 962.5 628.5 965.4 628.9 C968.3 629.3 971.7 629.7 974.9 628.9 C978.1 628.1 982.1 625.5 984.4 624.1 C986.7 622.7 986.7 623.3 988.5 620.7 C990.3 618.1 993.0 612.6 995.3 608.5 C997.6 604.4 1000.0 600.8 1002.1 596.3 C1004.2 591.8 1006.6 585.4 1007.6 581.3 C1008.6 577.2 1008.1 573.4 1008.2 571.8" fill="#0a70a6" stroke="#00121c" stroke-width="1.3" stroke-linejoin="round" stroke-linecap="round" />
<path d="M1008.2 571.8 C1007.4 574.1 1005.9 580.0 1003.5 585.4 C1001.1 590.8 997.6 598.5 994.0 604.4 C990.4 610.3 984.9 616.6 981.7 620.7 C978.5 624.8 976.0 627.5 974.9 628.9 L974.9 628.9 C976.5 628.1 982.1 625.5 984.4 624.1 C986.7 622.7 986.7 623.3 988.5 620.7 C990.3 618.1 993.0 612.6 995.3 608.5 C997.6 604.4 1000.0 600.8 1002.1 596.3 C1004.2 591.8 1006.6 585.4 1007.6 581.3 C1008.6 577.2 1008.1 573.4 1008.2 571.8Z" fill="#014a73" stroke="#00121c" stroke-width="1.2" stroke-linejoin="round" stroke-linecap="round" />
<path d="M915.1 705.1 L938.2 702.2 L1015.3 701.2 L1030.7 705.1 L1038.4 707.9 L1044.2 715.7 L1044.2 749.4 L974.8 759.0 L961.3 759.0 L908.7 749.4 L909.3 715.7 L911.0 709.0Z" fill="#02689b" stroke="#00121c" stroke-width="1.4" stroke-linejoin="round" stroke-linecap="round" />
<path d="M909.3 716.6 L911.0 709.0 L915.1 705.1 L938.2 702.2 L1015.3 701.2 L1030.7 705.1 L1038.4 707.9 L1044.2 715.7 L1044.2 717.6 L975.8 725.8 L961.3 725.3Z" fill="#0a70a6" stroke="#00121c" stroke-width="1.3" stroke-linejoin="round" stroke-linecap="round" />
<path d="M961.3 725.3 L961.3 759.0 L974.8 759.0 L975.8 725.8Z" fill="url(#gcorR)" stroke="#00121c" stroke-width="1.3" stroke-linejoin="round" stroke-linecap="round" />
<path d="M961.3 725.3 Q962 716 966.5 713.5 Q974 711.5 975.8 718 L975.8 725.8Z" fill="url(#gcorR)" stroke="#00121c" stroke-width="1.3" stroke-linejoin="round" stroke-linecap="round" />
<path d="M961.3 725.3 C962.4 725.6 965.6 727.1 968.0 727.2 C970.4 727.3 974.5 726.0 975.8 725.8" fill="none" stroke="#00121c" stroke-width="1.2" stroke-linejoin="round" stroke-linecap="round" />
<path d="M990.2 712.5 L993.1 723.7" fill="none" stroke="#00121c" stroke-width="1.3" stroke-linejoin="round" stroke-linecap="round" />
<path d="M988.0 712.7 L990.6 724.0" fill="none" stroke="#00121c" stroke-width="0.9" stroke-linejoin="round" stroke-linecap="round" />
<path d="M1021.1 708.5 L1024.9 720.0" fill="none" stroke="#00121c" stroke-width="1.3" stroke-linejoin="round" stroke-linecap="round" />
<path d="M1019.0 708.7 L1022.6 720.2" fill="none" stroke="#00121c" stroke-width="0.9" stroke-linejoin="round" stroke-linecap="round" />
<path d="M916.0 708.0 L966.0 713.5" fill="none" stroke="#00121c" stroke-width="1.2" stroke-linejoin="round" stroke-linecap="round" />
<path d="M918.9 640.0 L938.2 702.2 L967.1 705.3 L980.6 707.2 L1015.3 701.8 L985.1 623.5 L974.9 628.9 L965.4 628.9 L957.2 626.2 L945.0 610.0Z" fill="#02689b" stroke="#00121c" stroke-width="1.4" stroke-linejoin="round" stroke-linecap="round" />
<path d="M941.8 630.5 L967.1 705.3 L980.6 707.2 L957.0 626.5Z" fill="url(#glegR)" stroke="#00121c" stroke-width="1.3" stroke-linejoin="round" stroke-linecap="round" />
<path d="M840.0 630.0 L920.0 640.0 L938.2 702.2 L918.4 706.0 L914.6 699.7 L912.2 691.0 L898.4 688.5 L883.5 686.0 L864.8 707.2 L864.8 730.0 L855.6 728.3 L855.6 689.0 L846.0 680.0Z" fill="#02689b" stroke="none" stroke-width="1.4" stroke-linejoin="round" stroke-linecap="round" />
<path d="M855.6 689.2 L883.5 686.0" fill="none" stroke="#00121c" stroke-width="1.2" stroke-linejoin="round" stroke-linecap="round" />
<path d="M898.4 688.5 L912.2 691.0 L914.6 699.7 L917.0 705.0" fill="none" stroke="#00121c" stroke-width="1.3" stroke-linejoin="round" stroke-linecap="round" />
<path d="M864.8 707.2 L878.5 706.0 L898.4 688.5 L883.5 686.0Z" fill="#014f7b" stroke="#00121c" stroke-width="1.3" stroke-linejoin="round" stroke-linecap="round" />
<path d="M878.5 706.0 L898.4 688.5 L898.4 723.4 L878.5 727.7Z" fill="#026395" stroke="#00121c" stroke-width="1.3" stroke-linejoin="round" stroke-linecap="round" />
<path d="M864.8 707.2 L878.5 706.0 L878.5 727.7 L864.8 730.0Z" fill="#02689b" stroke="#00121c" stroke-width="1.3" stroke-linejoin="round" stroke-linecap="round" />
<path d="M855.6 728.3 L864.8 730.0" fill="none" stroke="#00121c" stroke-width="1.3" stroke-linejoin="round" stroke-linecap="round" />
<path d="M918.9 642.0 L938.2 702.2" fill="none" stroke="#00121c" stroke-width="1.3" stroke-linejoin="round" stroke-linecap="round" />
<path d="M772.2 677.5 L791.3 674.3 L826.2 680.6 L845.2 681.4 L851.6 683.8 L855.6 689.4 L855.6 728.3 L831.7 732.2 L816.7 732.2 L764.3 721.9 L765.1 687.8 L767.5 681.0Z" fill="#02689b" stroke="#00121c" stroke-width="1.4" stroke-linejoin="round" stroke-linecap="round" />
<path d="M765.1 688.2 L767.5 681.0 L772.2 677.5 L791.3 674.3 L826.2 680.6 L845.2 681.4 L851.6 683.8 L855.6 689.4 L855.6 695.7 L831.7 698.9 L815.9 697.3Z" fill="#0a70a6" stroke="#00121c" stroke-width="1.3" stroke-linejoin="round" stroke-linecap="round" />
<path d="M815.9 697.3 L816.7 732.2 L831.7 732.2 L831.7 698.9Z" fill="url(#gcorL)" stroke="#00121c" stroke-width="1.3" stroke-linejoin="round" stroke-linecap="round" />
<path d="M815.9 697.3 Q816.5 688.5 821 686.5 Q830 684.5 831.7 692 L831.7 698.9Z" fill="url(#gcorL)" stroke="#00121c" stroke-width="1.3" stroke-linejoin="round" stroke-linecap="round" />
<path d="M815.9 697.3 C817.2 697.7 821.4 699.5 824.0 699.8 C826.6 700.1 830.4 699.0 831.7 698.9" fill="none" stroke="#00121c" stroke-width="1.2" stroke-linejoin="round" stroke-linecap="round" />
<path d="M842.0 684.6 L845.2 695.5" fill="none" stroke="#00121c" stroke-width="1.3" stroke-linejoin="round" stroke-linecap="round" />
<path d="M846.8 684.0 L849.8 695.0" fill="none" stroke="#00121c" stroke-width="0.9" stroke-linejoin="round" stroke-linecap="round" />
<path d="M773.0 680.5 L821.0 686.5" fill="none" stroke="#00121c" stroke-width="1.2" stroke-linejoin="round" stroke-linecap="round" />
<path d="M815.1 628.0 L791.3 674.3 L826.2 680.3 L846.8 680.6 L866.0 640.0 L850.0 625.0Z" fill="#02689b" stroke="#00121c" stroke-width="1.4" stroke-linejoin="round" stroke-linecap="round" />
<path d="M817.8 632.0 L795.0 674.9" fill="none" stroke="#00121c" stroke-width="1.2" stroke-linejoin="round" stroke-linecap="round" />
<path d="M848.0 632.0 L826.2 680.3 L843.5 680.6 L861.5 640.0Z" fill="url(#glegL)" stroke="#00121c" stroke-width="1.3" stroke-linejoin="round" stroke-linecap="round" />
<path d="M944.5 254.0 C944.3 257.5 944.2 268.2 943.4 275.0 C942.6 281.8 941.4 288.0 939.5 295.0 C937.6 302.0 934.9 310.4 932.0 317.0 C929.1 323.6 923.9 331.4 922.3 334.3 L922 338.1 L943.5 349.2 L962.5 366.7 L978.4 385.7 L989.5 401.6 L989.4 401.6 L991 359.5 L982.2 327 L973.5 300 L962.2 254Z" fill="#02689b" stroke="#00121c" stroke-width="1.4" stroke-linejoin="round" stroke-linecap="round" />
<path d="M915.0 338.5 C916.2 338.4 917.2 336.3 922.0 338.1 C926.8 339.9 936.8 344.4 943.5 349.2 C950.2 354.0 956.7 360.6 962.5 366.7 C968.3 372.8 973.9 379.9 978.4 385.7 C982.9 391.5 987.6 399.0 989.5 401.6 L979 410 L976.5 404.0 C976.0 403.1 976.6 403.0 973.7 398.4 C970.9 393.8 964.4 382.8 959.4 376.2 C954.4 369.6 949.3 363.7 943.5 358.7 C937.7 353.7 931.5 348.9 924.4 346.0 C917.2 343.1 904.6 342.1 900.6 341.3Z" fill="#015380" stroke="#00121c" stroke-width="1.3" stroke-linejoin="round" stroke-linecap="round" />
<path d="M944.5 254.0 C944.3 257.5 944.2 268.2 943.4 275.0 C942.6 281.8 941.4 288.0 939.5 295.0 C937.6 302.0 934.9 310.4 932.0 317.0 C929.1 323.6 923.9 331.4 922.3 334.3 L919.4 333.2 C920.8 330.3 925.1 322.4 927.6 316.0 C930.1 309.6 932.8 301.8 934.6 295.0 C936.4 288.2 937.5 281.8 938.3 275.0 C939.1 268.2 939.1 257.5 939.2 254.0Z" fill="#1f8bc7" stroke="#00121c" stroke-width="1.3" stroke-linejoin="round" stroke-linecap="round" />
<path d="M880.0 339.5 L899.5 336.0 L919.4 334.1 L922.0 338.1 L915.0 338.7 L900.6 341.3 L882.0 340.7Z" fill="#1f8bc7" stroke="#00121c" stroke-width="1.2" stroke-linejoin="round" stroke-linecap="round" />
<path d="M899.5 336.0 L900.6 341.3" fill="none" stroke="#00121c" stroke-width="1.2" stroke-linejoin="round" stroke-linecap="round" />
<path d="M825.0 359.7 C828.0 357.9 836.8 352.0 843.0 349.0 C849.2 346.0 856.2 343.2 862.4 341.5 C868.6 339.8 873.8 339.4 880.0 338.5 C886.2 337.6 896.2 336.4 899.5 336.0" fill="none" stroke="#00121c" stroke-width="1.3" stroke-linejoin="round" stroke-linecap="round" />
<path d="M962.2 254.0 L972.2 294.8 L982.2 327.0 L991.0 359.5 L998.1 359.5 L991.7 327.0 L983.8 300.0 L979.6 282.3 L969.7 254.0Z" fill="#015a8a" stroke="#00121c" stroke-width="1.3" stroke-linejoin="round" stroke-linecap="round" />
<path d="M964.6 254.0 L974.6 294.8 L984.6 327.0 L993.2 359.5" fill="none" stroke="#001a28" stroke-width="1.4" stroke-linejoin="round" stroke-linecap="round" stroke-dasharray="1 1.3"/>
<path d="M991.0 359.5 L998.1 359.5 L998.9 401.6 L989.4 401.6Z" fill="#056da2" stroke="#00121c" stroke-width="1.3" stroke-linejoin="round" stroke-linecap="round" />
<path d="M992.8 360.0 L991.6 401.0" fill="none" stroke="#00121c" stroke-width="0.8" stroke-linejoin="round" stroke-linecap="round" />
<path d="M825.0 359.7 L827.3 357.9 L829.3 356.4 L831.2 355.2 L833.0 354.2 L834.7 353.4 L836.3 352.7 L837.9 352.0 L839.5 351.4 L841.2 350.7 L843.0 350.0 L844.9 349.2 L846.8 348.4 L848.7 347.7 L850.6 347.0 L852.6 346.3 L854.6 345.7 L856.5 345.1 L858.5 344.5 L860.4 344.0 L862.4 343.5 L864.4 343.1 L866.3 342.6 L868.3 342.3 L870.3 342.0 L872.2 341.7 L874.2 341.4 L876.2 341.2 L878.1 341.0 L880.1 340.8 L882.0 340.7 L883.9 340.6 L885.7 340.5 L887.5 340.5 L889.3 340.5 L891.0 340.5 L892.8 340.6 L894.7 340.7 L896.6 340.9 L898.5 341.1 L900.6 341.3 L902.8 341.6 L905.1 341.8 L907.5 342.2 L910.0 342.5 L912.5 342.9 L915.0 343.3 L917.4 343.9 L919.9 344.5 L922.2 345.2 L924.4 346.0 L926.5 346.9 L928.6 348.0 L930.6 349.1 L932.5 350.3 L934.4 351.5 L936.3 352.9 L938.2 354.3 L940.0 355.7 L941.7 357.2 L943.5 358.7 L945.2 360.2 L946.9 361.8 L948.6 363.4 L950.2 365.1 L951.8 366.9 L953.3 368.6 L954.8 370.5 L956.4 372.3 L957.9 374.2 L959.4 376.2 L960.9 378.2 L962.5 380.4 L964.0 382.6 L965.5 384.8 L967.0 387.1 L968.5 389.4 L969.9 391.7 L971.3 394.0 L972.5 396.2 L973.7 398.4 L974.8 400.5 L975.7 402.6 L976.6 404.7 L977.4 406.8 L978.2 408.8 L978.9 410.8 L979.6 412.9 L980.3 414.9 L980.9 416.9 L981.6 419.0 L982.2 421.1 L982.9 423.2 L983.5 425.4 L984.0 427.5 L984.6 429.7 L985.1 431.8 L985.6 433.9 L986.1 435.9 L986.5 437.8 L987.0 439.7 L987.4 441.4 L987.8 443.1 L988.2 444.6 L988.5 446.1 L988.9 447.6 L989.2 449.0 L989.5 450.5 L989.8 451.9 L990.2 453.4 L990.5 455.0 L990.9 456.6 L991.2 458.3 L991.6 460.0 L992.0 461.6 L992.3 463.4 L992.7 465.1 L993.1 466.8 L993.4 468.5 L993.7 470.3 L994.0 472.0 L994.3 473.7 L994.5 475.4 L994.7 477.0 L994.9 478.7 L995.1 480.3 L995.3 482.1 L995.5 483.8 L995.7 485.7 L995.8 487.6 L996.0 489.7 L996.2 491.9 L996.3 494.3 L996.5 496.8 L996.7 499.4 L996.8 502.0 L997.0 504.6 L997.1 507.2 L997.2 509.8 L997.3 512.3 L997.3 514.7 L997.3 517.0 L997.3 519.3 L997.2 521.6 L997.1 523.8 L997.0 526.0 L996.9 528.2 L996.8 530.3 L996.6 532.3 L996.5 534.2 L996.3 536.0 L996.1 537.7 L996.0 539.2 L995.8 540.6 L995.6 541.9 L995.3 543.2 L995.1 544.5 L994.9 545.8 L994.6 547.1 L994.3 548.5 L994.0 550.0 L993.7 551.6 L993.4 553.2 L993.1 554.9 L992.8 556.6 L992.4 558.3 L992.0 560.1 L991.6 561.9 L991.1 563.8 L990.5 565.7 L989.9 567.7 L989.2 569.8 L988.4 572.1 L987.5 574.4 L986.6 576.8 L985.6 579.2 L984.6 581.7 L983.5 584.1 L982.5 586.4 L981.4 588.7 L980.3 590.8 L979.2 592.8 L978.1 594.8 L976.9 596.6 L975.7 598.5 L974.5 600.2 L973.3 602.0 L972.0 603.7 L970.8 605.3 L969.4 606.9 L968.1 608.5 L966.7 610.1 L965.2 611.6 L963.6 613.1 L962.0 614.6 L960.4 616.1 L958.8 617.4 L957.3 618.7 L955.8 620.0 L954.4 621.1 L953.1 622.1 L951.9 623.0 L950.9 623.7 L950.0 624.3 L949.1 624.9 L948.3 625.3 L947.4 625.7 L946.6 626.2 L945.7 626.6 L944.7 627.1 L943.6 627.6 L942.4 628.2 L941.2 628.8 L939.9 629.4 L938.6 630.0 L937.2 630.6 L935.8 631.2 L934.4 631.8 L932.9 632.5 L931.5 633.1 L930.0 633.7 L928.5 634.3 L926.9 635.0 L925.3 635.7 L923.7 636.3 L922.0 637.0 L920.4 637.7 L918.7 638.3 L917.1 638.9 L915.5 639.5 L914.0 640.0 L912.5 640.5 L911.2 640.9 L909.8 641.3 L908.5 641.7 L907.2 642.0 L905.9 642.4 L904.6 642.7 L903.2 643.0 L901.6 643.2 L900.0 643.5 L898.3 643.8 L896.5 644.0 L894.8 644.3 L892.9 644.6 L891.0 644.8 L889.0 645.0 L886.9 645.2 L884.7 645.2 L882.4 645.2 L880.0 645.0 L877.5 644.8 L874.8 644.6 L872.0 644.5 L869.2 644.2 L866.2 643.9 L863.2 643.4 L860.0 642.7 L856.8 641.8 L853.5 640.6 L850.0 639.0 L846.4 637.2 L842.5 635.3 L838.4 633.3 L834.2 631.0 L830.0 628.5 L825.8 625.7 L821.6 622.4 L817.5 618.8 L813.6 614.7 L810.0 610.0 L806.5 604.8 L803.0 598.9 L799.5 592.6 L796.1 585.9 L792.8 578.8 L789.7 571.4 L786.8 563.8 L784.2 555.9 L781.9 548.0 L780.0 540.0 L778.4 531.7 L777.0 522.8 L775.9 513.5 L775.0 504.0 L774.4 494.4 L774.0 484.8 L773.9 475.4 L774.0 466.4 L774.4 457.9 L775.0 450.0 L775.9 442.7 L777.2 435.6 L778.8 428.9 L780.7 422.4 L782.8 416.3 L785.1 410.4 L787.5 404.9 L790.0 399.6 L792.5 394.7 L795.0 390.0 L797.6 385.7 L800.6 381.7 L803.6 378.1 L806.9 374.8 L810.1 371.7 L813.4 368.9 L816.6 366.3 L819.6 364.0 L822.4 361.8Z" fill="url(#grim)" stroke="#00121c" stroke-width="1.4" stroke-linejoin="round" stroke-linecap="round" />
<path d="M827.4 362.7 L829.6 360.9 L831.5 359.5 L833.2 358.4 L834.8 357.5 L836.3 356.8 L837.7 356.2 L839.3 355.6 L840.9 355.0 L842.6 354.3 L844.5 353.5 L846.3 352.7 L848.2 352.0 L850.0 351.3 L851.9 350.6 L853.8 349.9 L855.7 349.3 L857.6 348.7 L859.5 348.2 L861.4 347.7 L863.3 347.2 L865.2 346.8 L867.1 346.4 L869.0 346.0 L870.9 345.7 L872.8 345.4 L874.7 345.2 L876.6 345.0 L878.5 344.8 L880.4 344.6 L882.2 344.5 L884.0 344.4 L885.8 344.3 L887.5 344.3 L889.2 344.3 L890.9 344.3 L892.6 344.4 L894.4 344.5 L896.2 344.6 L898.1 344.8 L900.1 345.1 L902.3 345.3 L904.6 345.6 L907.0 345.9 L909.4 346.3 L911.8 346.6 L914.2 347.1 L916.6 347.6 L918.8 348.1 L921.0 348.8 L923.0 349.5 L924.9 350.4 L926.8 351.3 L928.7 352.3 L930.5 353.5 L932.3 354.7 L934.1 355.9 L935.8 357.3 L937.6 358.7 L939.3 360.1 L941.0 361.6 L942.7 363.0 L944.3 364.6 L945.8 366.1 L947.4 367.7 L948.9 369.4 L950.4 371.1 L951.9 372.9 L953.4 374.7 L954.9 376.6 L956.4 378.5 L957.9 380.5 L959.4 382.6 L960.9 384.7 L962.4 386.9 L963.9 389.2 L965.3 391.4 L966.7 393.7 L968.0 395.9 L969.2 398.1 L970.3 400.1 L971.3 402.2 L972.3 404.2 L973.1 406.1 L973.9 408.1 L974.6 410.1 L975.3 412.1 L976.0 414.1 L976.7 416.1 L977.3 418.1 L978.0 420.1 L978.6 422.2 L979.2 424.3 L979.8 426.4 L980.4 428.5 L980.9 430.6 L981.4 432.7 L981.9 434.8 L982.4 436.8 L982.9 438.7 L983.3 440.6 L983.7 442.3 L984.1 444.0 L984.5 445.5 L984.8 447.0 L985.2 448.4 L985.5 449.8 L985.8 451.3 L986.1 452.7 L986.4 454.2 L986.8 455.8 L987.1 457.4 L987.5 459.1 L987.9 460.8 L988.3 462.5 L988.6 464.1 L989.0 465.8 L989.3 467.5 L989.7 469.2 L990.0 470.9 L990.2 472.6 L990.5 474.3 L990.7 475.9 L991.0 477.5 L991.2 479.1 L991.4 480.8 L991.5 482.5 L991.7 484.2 L991.9 486.0 L992.0 487.9 L992.2 490.0 L992.4 492.2 L992.6 494.6 L992.7 497.0 L992.9 499.6 L993.0 502.2 L993.2 504.8 L993.3 507.4 L993.4 509.9 L993.5 512.4 L993.5 514.7 L993.5 517.0 L993.5 519.2 L993.4 521.5 L993.3 523.7 L993.2 525.8 L993.1 528.0 L993.0 530.0 L992.8 532.0 L992.7 533.9 L992.5 535.6 L992.4 537.3 L992.2 538.7 L992.0 540.1 L991.8 541.3 L991.6 542.6 L991.4 543.8 L991.1 545.0 L990.9 546.3 L990.6 547.7 L990.3 549.3 L990.0 550.9 L989.6 552.5 L989.3 554.2 L989.0 555.8 L988.7 557.5 L988.3 559.2 L987.9 561.0 L987.4 562.7 L986.9 564.6 L986.3 566.5 L985.6 568.6 L984.8 570.8 L984.0 573.1 L983.0 575.4 L982.1 577.8 L981.1 580.2 L980.1 582.5 L979.0 584.8 L978.0 587.0 L976.9 589.0 L975.9 590.9 L974.8 592.8 L973.7 594.6 L972.6 596.4 L971.4 598.1 L970.2 599.7 L969.0 601.4 L967.8 602.9 L966.5 604.5 L965.2 606.0 L963.9 607.5 L962.5 608.9 L961.0 610.4 L959.5 611.8 L957.9 613.2 L956.4 614.5 L954.9 615.8 L953.4 617.0 L952.0 618.1 L950.8 619.1 L949.7 619.9 L948.8 620.6 L947.9 621.1 L947.2 621.6 L946.5 622.0 L945.7 622.3 L944.9 622.7 L944.0 623.2 L943.0 623.6 L941.9 624.2 L940.8 624.8 L939.6 625.3 L938.3 625.9 L937.0 626.5 L935.7 627.1 L934.3 627.7 L932.9 628.3 L931.4 629.0 L930.0 629.6 L928.5 630.2 L927.0 630.8 L925.5 631.5 L923.9 632.2 L922.2 632.8 L920.6 633.5 L919.0 634.1 L917.4 634.8 L915.8 635.3 L914.3 635.9 L912.8 636.4 L911.4 636.9 L910.0 637.3 L908.8 637.7 L907.5 638.0 L906.3 638.4 L905.1 638.7 L903.8 639.0 L902.4 639.2 L901.0 639.5 L899.4 639.7 L897.7 640.0 L895.9 640.3 L894.2 640.6 L892.4 640.8 L890.6 641.1 L888.7 641.2 L886.8 641.4 L884.7 641.4 L882.6 641.4 L880.3 641.2 L877.7 641.0 L875.0 640.9 L872.3 640.7 L869.6 640.5 L866.8 640.1 L863.9 639.7 L861.0 639.0 L858.0 638.2 L854.9 637.1 L851.6 635.6 L848.0 633.8 L844.2 631.9 L840.2 629.9 L836.1 627.7 L832.0 625.3 L828.0 622.6 L824.0 619.5 L820.2 616.1 L816.5 612.2 L813.1 607.8 L809.7 602.7 L806.2 597.0 L802.8 590.9 L799.5 584.3 L796.3 577.3 L793.3 570.0 L790.4 562.5 L787.9 554.8 L785.6 547.0 L783.7 539.2 L782.1 531.0 L780.8 522.3 L779.7 513.1 L778.8 503.7 L778.2 494.2 L777.8 484.7 L777.7 475.4 L777.8 466.5 L778.2 458.1 L778.8 450.4 L779.7 443.2 L781.0 436.4 L782.5 429.8 L784.3 423.6 L786.4 417.6 L788.6 411.9 L790.9 406.4 L793.4 401.3 L795.8 396.4 L798.3 391.9 L800.8 387.8 L803.5 384.1 L806.5 380.6 L809.5 377.5 L812.7 374.5 L815.8 371.8 L818.9 369.3 L821.9 367.0 L824.8 364.7Z" fill="#02689b" stroke="#00121c" stroke-width="1.3" stroke-linejoin="round" stroke-linecap="round" />
<path d="M889.0 343.5 L883.5 381.5" fill="none" stroke="#00121c" stroke-width="1.3" stroke-linejoin="round" stroke-linecap="round" />
<path d="M878.5 622.4 L882.2 640.5" fill="none" stroke="#00121c" stroke-width="1.3" stroke-linejoin="round" stroke-linecap="round" />
<ellipse cx="867.6" cy="494.2" rx="72.3" ry="103.0" transform="rotate(-7.05 867.6 494.2)" fill="#02689b" stroke="#00121c" stroke-width="1.4" />
<ellipse cx="866.3" cy="494.4" rx="72.3" ry="103.0" transform="rotate(-7.05 866.3 494.4)" fill="#1f8bc7" stroke="#00121c" stroke-width="1.3" />
<ellipse cx="861.3" cy="495.0" rx="72.0" ry="102.5" transform="rotate(-7.05 861.3 495.0)" fill="#015380" stroke="#00121c" stroke-width="1.3" />
<ellipse cx="832.5" cy="498.7" rx="95.2" ry="135.6" transform="rotate(-7.05 832.5 498.7)" fill="#026395" stroke="#00121c" stroke-width="1.4" />
<ellipse cx="830.0" cy="499.0" rx="93.0" ry="132.5" transform="rotate(-7.05 830.0 499.0)" fill="url(#grim)" stroke="#00121c" stroke-width="0.8" />
<ellipse cx="828.5" cy="499.2" rx="91.4" ry="130.2" transform="rotate(-7.05 828.5 499.2)" fill="#016596" stroke="#00121c" stroke-width="1.4" />
<ellipse cx="829.4" cy="499.2" rx="67.0" ry="95.5" transform="rotate(-7.05 829.4 499.2)" fill="#016596" stroke="#00121c" stroke-width="1.3" />
<ellipse cx="826.8" cy="499.5" rx="64.9" ry="92.5" transform="rotate(-7.05 826.8 499.5)" fill="#016596" stroke="#00121c" stroke-width="1.3" />
<ellipse cx="801.8" cy="392.4" rx="6.5" ry="9.3" transform="rotate(-7.05 801.8 392.4)" fill="#016596" stroke="#00121c" stroke-width="1.3" />
<path d="M796.3 393.3 L807.1 391.1" fill="none" stroke="#00121c" stroke-width="1.3" stroke-linejoin="round" stroke-linecap="round" />
<ellipse cx="879.7" cy="421.0" rx="6.5" ry="9.3" transform="rotate(-7.05 879.7 421.0)" fill="#016596" stroke="#00121c" stroke-width="1.3" />
<path d="M874.2 421.9 L885.0 419.7" fill="none" stroke="#00121c" stroke-width="1.3" stroke-linejoin="round" stroke-linecap="round" />
<ellipse cx="906.6" cy="528.4" rx="6.5" ry="9.3" transform="rotate(-7.05 906.6 528.4)" fill="#016596" stroke="#00121c" stroke-width="1.3" />
<path d="M901.1 529.3 L911.9 527.1" fill="none" stroke="#00121c" stroke-width="1.3" stroke-linejoin="round" stroke-linecap="round" />
<ellipse cx="856.0" cy="606.0" rx="6.5" ry="9.3" transform="rotate(-7.05 856.0 606.0)" fill="#016596" stroke="#00121c" stroke-width="1.3" />
<path d="M850.5 606.9 L861.3 604.7" fill="none" stroke="#00121c" stroke-width="1.3" stroke-linejoin="round" stroke-linecap="round" />
<ellipse cx="778.6" cy="577.3" rx="6.5" ry="9.3" transform="rotate(-7.05 778.6 577.3)" fill="#016596" stroke="#00121c" stroke-width="1.3" />
<path d="M773.1 578.2 L783.9 576.0" fill="none" stroke="#00121c" stroke-width="1.3" stroke-linejoin="round" stroke-linecap="round" />
<ellipse cx="752.0" cy="469.7" rx="6.5" ry="9.3" transform="rotate(-7.05 752.0 469.7)" fill="#016596" stroke="#00121c" stroke-width="1.3" />
<path d="M746.5 470.6 L757.3 468.4" fill="none" stroke="#00121c" stroke-width="1.3" stroke-linejoin="round" stroke-linecap="round" />
<ellipse cx="830.4" cy="499.5" rx="48.8" ry="69.5" transform="rotate(-7.05 830.4 499.5)" fill="#016596" stroke="#00121c" stroke-width="1.3" />
<ellipse cx="829.2" cy="499.6" rx="47.0" ry="67.0" transform="rotate(-7.05 829.2 499.6)" fill="#016596" stroke="#00121c" stroke-width="1.3" />
<ellipse cx="830.4" cy="499.5" rx="41.9" ry="59.7" transform="rotate(-7.05 830.4 499.5)" fill="url(#ghole)" stroke="#00121c" stroke-width="1.4" />
<g clip-path="url(#chole)">
<ellipse cx="872.4" cy="494.3" rx="41.9" ry="59.7" transform="rotate(-7.05 872.4 494.3)" fill="url(#ggray)" stroke="#333" stroke-width="1.2" />
<ellipse cx="875.5" cy="493.9" rx="40.4" ry="57.5" transform="rotate(-7.05 875.5 493.9)" fill="none" stroke="#444" stroke-width="0.9" />
<ellipse cx="878.5" cy="493.5" rx="38.6" ry="55.0" transform="rotate(-7.05 878.5 493.5)" fill="none" stroke="#444" stroke-width="0.9" />
<ellipse cx="884.5" cy="492.7" rx="35.8" ry="51.0" transform="rotate(-7.05 884.5 492.7)" fill="none" stroke="#8a8a8a" stroke-width="0.8" />
<path d="M834.5 503 Q852 497 870 489" fill="none" stroke="#222" stroke-width="1.3" stroke-linejoin="round" stroke-linecap="round" />
<path d="M834.5 505.4 Q852 499.2 870 491.7" fill="none" stroke="#f2f2f2" stroke-width="1.3" stroke-linejoin="round" stroke-linecap="round" />
<path d="M836 504.5 Q842.5 503.5 842 509" fill="none" stroke="#333" stroke-width="0.9" stroke-linejoin="round" stroke-linecap="round" />
<path d="M866 474 L868.5 488" fill="none" stroke="#555" stroke-width="0.9" stroke-linejoin="round" stroke-linecap="round" />
</g>
<ellipse cx="830.4" cy="499.5" rx="41.9" ry="59.7" transform="rotate(-7.05 830.4 499.5)" fill="none" stroke="#00121c" stroke-width="1.4" />
<defs><linearGradient id="gth" gradientUnits="userSpaceOnUse" x1="0" x2="0" y1="226" y2="236"><stop offset="0" stop-color="#014870"/><stop offset=".5" stop-color="#015a8a"/><stop offset=".62" stop-color="#1f8bc7"/><stop offset="1" stop-color="#1c86c0"/></linearGradient></defs>
<ellipse cx="918.6" cy="240.4" rx="91" ry="15.8" transform="rotate(1.4 918.6 240.4)" fill="#015a8a" stroke="#00121c" stroke-width="1.15"/>
<ellipse cx="918.6" cy="238.2" rx="91.3" ry="15.9" transform="rotate(1.4 918.6 238.2)" fill="#1f8bc7" stroke="#00121c" stroke-width="1.2"/>
<ellipse cx="918.6" cy="236" rx="91.2" ry="15.9" transform="rotate(1.4 918.6 236)" fill="#0a70a6" stroke="#00121c" stroke-width="1.2"/>
<ellipse cx="918.4" cy="232.5" rx="91" ry="15.9" transform="rotate(1.4 918.4 232.5)" fill="#015f8f" stroke="#00121c" stroke-width="1.15"/>
<ellipse cx="918.4" cy="232.9" rx="87.5" ry="14.9" transform="rotate(1.4 918.4 232.9)" fill="none" stroke="#00121c" stroke-width="0.9"/>
<ellipse cx="919.2" cy="232.7" rx="67" ry="12" transform="rotate(1.4 919.2 232.7)" fill="#02689b" stroke="#00121c" stroke-width="1.15"/>
<ellipse cx="919.2" cy="232.2" rx="60.5" ry="10.7" transform="rotate(1.4 919.2 232.2)" fill="#015380" stroke="#00121c" stroke-width="1.2"/>
<ellipse cx="918.8" cy="231.6" rx="52" ry="9.3" transform="rotate(1.4 918.8 231.6)" fill="#02689b" stroke="#00121c" stroke-width="1.2"/>
<ellipse cx="918.8" cy="231.4" rx="46" ry="8.2" transform="rotate(1.4 918.8 231.4)" fill="#015380" stroke="#00121c" stroke-width="1.2"/>
<ellipse cx="919.2" cy="230.8" rx="32.5" ry="6" transform="rotate(1.4 919.2 230.8)" fill="#02689b" stroke="#00121c" stroke-width="1.2"/>
<ellipse cx="920.7" cy="230.7" rx="22" ry="4.7" transform="rotate(1.4 920.7 230.7)" fill="url(#gth)" stroke="#00121c" stroke-width="1.2"/>
<ellipse cx="843" cy="230.6" rx="4.8" ry="1.584" transform="rotate(1.4 843 230.6)" fill="#014870" stroke="#00121c" stroke-width="0.9"/>
<ellipse cx="884.7" cy="218.8" rx="3.4" ry="1.122" transform="rotate(1.4 884.7 218.8)" fill="#014870" stroke="#00121c" stroke-width="0.9"/>
<ellipse cx="974" cy="224.2" rx="3.4" ry="1.122" transform="rotate(1.4 974 224.2)" fill="#014870" stroke="#00121c" stroke-width="0.9"/>
<ellipse cx="988.6" cy="239" rx="3.6" ry="1.1880000000000002" transform="rotate(1.4 988.6 239)" fill="#014870" stroke="#00121c" stroke-width="0.9"/>
<ellipse cx="907.2" cy="243.3" rx="4" ry="1.32" transform="rotate(1.4 907.2 243.3)" fill="#014870" stroke="#00121c" stroke-width="0.9"/>
<path d="M981.3 243.1 L982.8 246.8 L981.8 254.5" fill="none" stroke="#00121c" stroke-width="1.2" stroke-linejoin="round" stroke-linecap="round" />
<path d="M872 222.5 L874.5 227.5 L872.2 232" fill="none" stroke="#00121c" stroke-width="0.9" stroke-linejoin="round" stroke-linecap="round" />
<path d="M897 227 L898.5 231" fill="none" stroke="#00121c" stroke-width="0.9" stroke-linejoin="round" stroke-linecap="round" />
</svg>
</div>
<!-- NAV CUBE / SCALE / CHAT -->
<div id="nav">
<!-- chat -->
<div class="abs" style="left:1832px;top:595.500px;width:60px;height:60px;border-radius:50%;background:#0a72a8;box-shadow:0 2px 10px rgba(0,0,0,.18)"></div>
<svg class="abs" style="left:1846px;top:609px" width="32" height="34" viewBox="0 0 32 34"><path d="M6 2.500 H26 Q29 2.500 29 5.500 V30.500 L23.500 26.500 H6 Q3 26.500 3 23.500 V5.500 Q3 2.500 6 2.500Z" fill="#fff"/><path d="M8 18.500 Q16 24.500 24 18.500" fill="none" stroke="#0a72a8" stroke-width="1.800" stroke-linecap="round"/></svg>
<!-- nav cube -->
<svg class="abs" style="left:1690px;top:655px" width="215" height="215" viewBox="1690 655 215 215">
<g fill="none" stroke="#666" stroke-width="1.300" stroke-linecap="round" stroke-linejoin="round">
<path d="M1789.500 669.500 L1794.700 664.500 L1800 669.500"/>
<path d="M1789.500 852.500 L1794.700 857.500 L1800 852.500"/>
<path d="M1703 756 L1698 761.300 L1703 766.600"/>
<path d="M1887 756 L1892 761.300 L1887 766.600"/>
<path d="M1850.500 700.500 L1856.600 694.500 L1862.700 700.500 M1852.500 699 V706 H1855.200 V702 H1858 V706 H1860.700 V699" stroke-width="1.100"/>
<path d="M1723.500 823 A6.500 6.500 0 1 0 1731 821" stroke-width="1"/>
<path d="M1863 823 A6.500 6.500 0 1 1 1855.500 821" stroke-width="1"/>
</g>
<path d="M1720.500 822.500 l4.800 -1 l-2.600 4.200z" fill="#666"/><path d="M1866 822.500 l-4.800 -1 l2.600 4.200z" fill="#666"/>
<g fill="none" stroke="#a8a8a8" stroke-width="1">
<path d="M1740.600 722.800 L1793.300 730.900 L1791.500 806.900 L1737.800 796.300Z"/>
<path d="M1793.300 730.900 L1846.300 724.500 L1845.300 799.800 L1791.500 806.900"/>
<path d="M1740.600 722.800 L1793.300 715 L1846.300 724.500"/>
<path d="M1737.800 796.300 L1792.500 788.500 L1845.300 799.800" stroke-dasharray="3 3" stroke="#c0c0c0"/>
<path d="M1793.300 715 L1792.500 788.500" stroke-dasharray="3 3" stroke="#d5d5d5"/>
</g>
<path d="M1733.500 688 L1731.800 800.500" stroke="#6fe06f" stroke-width="1.300"/><path d="M1733.500 682 l-2 7.500 h4z" fill="#6fe06f"/>
<path d="M1731.800 800.500 L1808 791.300" stroke="#f59a9a" stroke-width="1.300"/><path d="M1813 790.700 l-7.500 -1.200 l.5 4z" fill="#f59a9a"/>
<path d="M1731.800 800.500 L1806 813.700" stroke="#5f64f5" stroke-width="1.300"/><path d="M1812 814.800 l-7 -3.200 l-.7 4z" fill="#5f64f5"/>
<text x="1730.500" y="677" font-size="17" fill="#4fd84f" font-family="Liberation Sans">y</text>
<text x="1817.500" y="795" font-size="15.500" fill="#f37f7f" font-family="Liberation Sans">X</text>
<text x="1818.500" y="824" font-size="15.500" fill="#4f55f0" font-family="Liberation Sans">Z</text>
<text transform="translate(1750.500,768.500) rotate(9) scale(.72,1)" font-size="12" fill="#8a8a8a" font-family="Liberation Sans">FRONT</text>
<text transform="translate(1811,772) rotate(-6) scale(.7,1)" font-size="12" fill="#8a8a8a" font-family="Liberation Sans">TOP</text>
</svg>
<!-- scale bar -->
<div class="abs" style="left:843px;top:854.500px;width:228px;height:2px;background:#333"></div>
<div class="abs" style="left:843px;top:852px;width:2px;height:4px;background:#333"></div>
<div class="abs" style="left:1069px;top:852px;width:2px;height:4px;background:#333"></div>
<div class="t" id="t_scale" style="left:937.500px;top:866.800px;font-size:14px;line-height:16px;color:#444;letter-spacing:0.6px">0.1 m</div>
</div>
</body>
</html>
